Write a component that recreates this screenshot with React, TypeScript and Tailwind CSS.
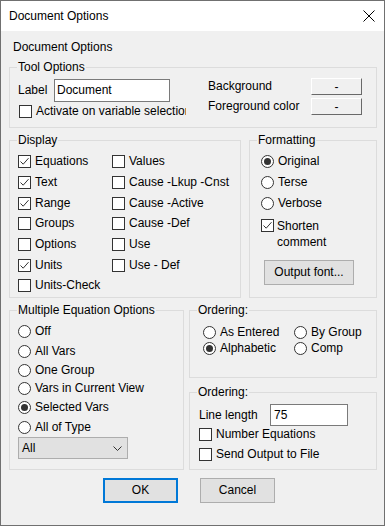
import React from "react";

function Group({
  label,
  className,
  children,
}: {
  label: string;
  className: string;
  children?: React.ReactNode;
}) {
  return (
    <div className={"relative border border-[#dcdcdc] " + className}>
      <span className="absolute left-[7px] top-[-8px] bg-[#f0f0f0] px-[1px] leading-[15px] whitespace-nowrap">
        {label}
      </span>
      {children}
    </div>
  );
}

function Check({ checked }: { checked?: boolean }) {
  return (
    <span className="w-[13px] h-[13px] border border-[#333333] bg-white shrink-0 flex items-center justify-center">
      {checked && (
        <svg width="11" height="11" viewBox="0 0 11 11">
          <path d="M1.5 5.5 L4.2 8.2 L9.5 2.2" stroke="#333333" fill="none" strokeWidth="1" />
        </svg>
      )}
    </span>
  );
}

function Radio({ on }: { on?: boolean }) {
  return (
    <span className="w-[13px] h-[13px] rounded-full border border-[#333333] bg-white shrink-0 flex items-center justify-center">
      {on && <span className="w-[7px] h-[7px] rounded-full bg-[#333333]" />}
    </span>
  );
}

function CheckRow({ label, checked, cls }: { label: string; checked?: boolean; cls: string }) {
  return (
    <div className={"flex items-center h-[13px] whitespace-nowrap " + cls}>
      <Check checked={checked} />
      <span className="ml-[4px] leading-[13px]">{label}</span>
    </div>
  );
}

function RadioRow({ label, on, cls }: { label: string; on?: boolean; cls: string }) {
  return (
    <div className={"flex items-center h-[13px] whitespace-nowrap " + cls}>
      <Radio on={on} />
      <span className="ml-[4px] leading-[13px]">{label}</span>
    </div>
  );
}

const gaps = ["mt-0", "mt-[8px]", "mt-[8px]", "mt-[7px]", "mt-[8px]", "mt-[8px]", "mt-[7px]"];

export default function App() {
  const col1: [string, boolean][] = [
    ["Equations", true],
    ["Text", true],
    ["Range", true],
    ["Groups", false],
    ["Options", false],
    ["Units", true],
    ["Units-Check", false],
  ];
  const col2 = ["Values", "Cause -Lkup -Cnst", "Cause -Active", "Cause -Def", "Use", "Use - Def"];
  const meo: [string, boolean, string][] = [
    ["Off", false, "mt-0"],
    ["All Vars", false, "mt-[7px]"],
    ["One Group", false, "mt-[6px]"],
    ["Vars in Current View", false, "mt-[5px]"],
    ["Selected Vars", true, "mt-[6px]"],
    ["All of Type", false, "mt-[7px]"],
  ];

  return (
    <div className="w-[385px] h-[526px] border border-[#707070] bg-[#f0f0f0] flex flex-col font-[family-name:Liberation_Sans,Arial,sans-serif] text-[12px] text-black overflow-hidden">
      {/* title bar */}
      <div className="h-[30px] bg-white flex items-center justify-between pl-[8px] pr-[9px] shrink-0">
        <span className="leading-[15px]">Document Options</span>
        <svg width="12" height="12" viewBox="0 0 12 12">
          <path d="M0.5 0.5 L11.5 11.5 M11.5 0.5 L0.5 11.5" stroke="#000" strokeWidth="1" fill="none" />
        </svg>
      </div>

      <div className="flex flex-col pl-[8px] pr-[7px]">
        <div className="mt-[9px] ml-[4px] leading-[15px]">Document Options</div>

        {/* Tool Options */}
        <Group label="Tool Options" className="mt-[12px] h-[61px] flex">
          <div className="w-[176px] pl-[8px] pt-[11px] flex flex-col">
            <div className="flex items-center">
              <span className="w-[36px] leading-[15px]">Label</span>
              <div className="w-[116px] h-[23px] border border-[#7a7a7a] bg-white flex items-center pl-[2px] leading-[15px]">
                Document
              </div>
            </div>
            <div className="mt-[3px] ml-[1px] w-[167px] overflow-hidden">
              <CheckRow label="Activate on variable selection" cls="" />
            </div>
          </div>
          <div className="ml-[22px] pt-[10px] flex flex-col">
            <div className="flex items-center h-[17px]">
              <span className="w-[103px] leading-[15px] whitespace-nowrap">Background</span>
              <div className="w-[51px] h-[17px] bg-[#f0f0f0] border border-t-white border-l-white border-r-[#696969] border-b-[#696969] flex items-center justify-center leading-[12px]">
                -
              </div>
            </div>
            <div className="flex items-center h-[17px] mt-[3px]">
              <span className="w-[103px] leading-[15px] whitespace-nowrap">Foreground color</span>
              <div className="w-[51px] h-[17px] bg-[#f0f0f0] border border-t-white border-l-white border-r-[#696969] border-b-[#696969] flex items-center justify-center leading-[12px]">
                -
              </div>
            </div>
          </div>
        </Group>

        {/* Display / Formatting */}
        <div className="mt-[12px] h-[158px] flex">
          <Group label="Display" className="w-[232px] h-[158px] flex pl-[8px] pt-[14px]">
            <div className="w-[94px] flex flex-col">
              {col1.map(([l, c], i) => (
                <CheckRow key={l} label={l} checked={c} cls={gaps[i]} />
              ))}
            </div>
            <div className="flex flex-col">
              {col2.map((l, i) => (
                <CheckRow key={l} label={l} cls={gaps[i]} />
              ))}
            </div>
          </Group>
          <Group label="Formatting" className="ml-[8px] w-[128px] h-[158px] flex flex-col pl-[11px] pt-[14px]">
            <RadioRow label="Original" on cls="mt-0" />
            <RadioRow label="Terse" cls="mt-[8px]" />
            <RadioRow label="Verbose" cls="mt-[8px]" />
            <div className="flex items-start mt-[8px]">
              <span className="mt-[1px]">
                <Check checked />
              </span>
              <div className="ml-[3px] leading-[16px]">
                Shorten
                <br />
                comment
              </div>
            </div>
            <div className="mt-[10px] ml-[3px] w-[90px] h-[25px] bg-[#e1e1e1] border border-[#adadad] flex items-center justify-center leading-[15px]">
              Output font...
            </div>
          </Group>
        </div>

        {/* Multiple equation options / ordering */}
        <div className="mt-[12px] h-[160px] flex">
          <Group label="Multiple Equation Options" className="w-[175px] h-[160px] flex flex-col pl-[8px] pt-[14px]">
            {meo.map(([l, o, c]) => (
              <RadioRow key={l} label={l} on={o} cls={c} />
            ))}
            <div className="mt-[3px] w-[110px] h-[22px] bg-[#e1e1e1] border border-[#adadad] flex items-center justify-between pl-[3px] pr-[5px] leading-[15px]">
              <span>All</span>
              <svg width="9" height="5" viewBox="0 0 9 5">
                <path d="M0.5 0.5 L4.5 4.5 L8.5 0.5" stroke="#333" strokeWidth="1" fill="none" />
              </svg>
            </div>
          </Group>
          <div className="ml-[5px] w-[188px] flex flex-col">
            <Group label="Ordering:" className="h-[68px] flex pl-[13px] pt-[15px]">
              <div className="w-[91px] flex flex-col">
                <RadioRow label="As Entered" cls="mt-0" />
                <RadioRow label="Alphabetic" on cls="mt-[3px]" />
              </div>
              <div className="flex flex-col">
                <RadioRow label="By Group" cls="mt-0" />
                <RadioRow label="Comp" cls="mt-[3px]" />
              </div>
            </Group>
            <Group label="Ordering:" className="mt-[14px] h-[78px] flex flex-col pl-[9px] pt-[11px]">
              <div className="flex items-center">
                <span className="w-[71px] leading-[15px] whitespace-nowrap">Line length</span>
                <div className="w-[78px] h-[22px] border border-[#7a7a7a] bg-white flex items-center pl-[3px] leading-[15px]">
                  75
                </div>
              </div>
              <CheckRow label="Number Equations" cls="mt-[2px]" />
              <CheckRow label="Send Output to File" cls="mt-[7px]" />
            </Group>
          </div>
        </div>

        {/* buttons */}
        <div className="mt-[8px] flex">
          <div className="ml-[94px] w-[75px] h-[25px] bg-[#e1e1e1] border-2 border-[#0078d7] flex items-center justify-center leading-[15px]">
            OK
          </div>
          <div className="ml-[22px] w-[75px] h-[25px] bg-[#e1e1e1] border border-[#adadad] flex items-center justify-center leading-[15px]">
            Cancel
          </div>
        </div>
      </div>
    </div>
  );
}
